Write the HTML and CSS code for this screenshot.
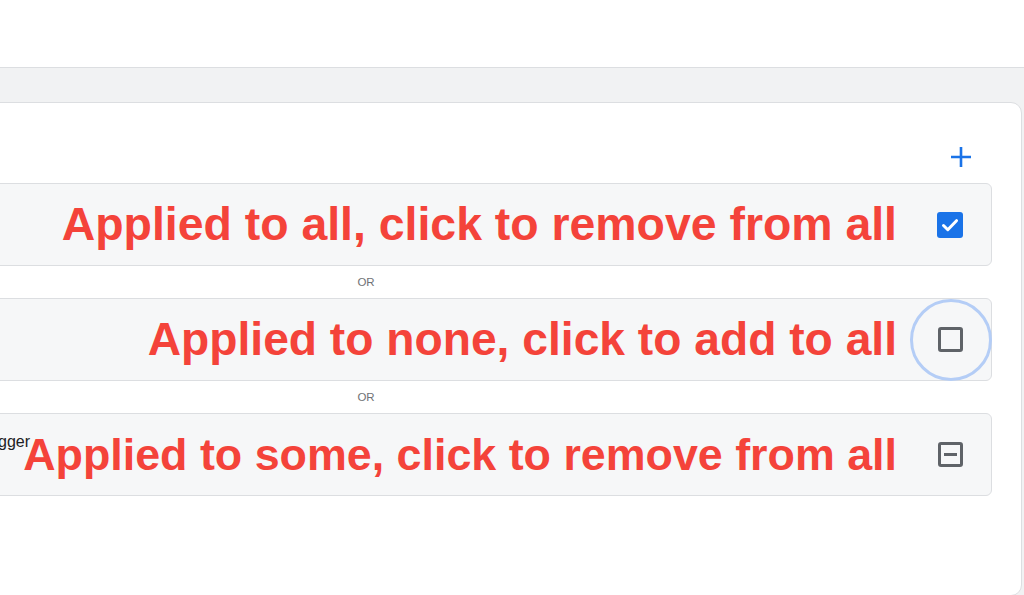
FILE: index.html
```html
<!DOCTYPE html>
<html>
<head>
<meta charset="utf-8">
<link rel="stylesheet" href="styles.css">
</head>
<body>
<div class="topbar"></div>
<div class="band">
  <div class="card">
    <div class="add-row">
      <svg class="plus" width="22" height="22" viewBox="0 0 22 22"><path d="M11 1v20M1 11h20" stroke="#1a73e8" stroke-width="2.6" fill="none"/></svg>
    </div>
    <div class="row">
      <span class="note note-all">Applied to all, click to remove from all</span>
      <span class="box checked">
        <svg width="26" height="26" viewBox="0 0 26 26"><path d="M6.5 13.5l4.3 4.2 8.7-9" stroke="#fff" stroke-width="3" fill="none" stroke-linecap="round" stroke-linejoin="round"/></svg>
      </span>
    </div>
    <div class="or">OR</div>
    <div class="row">
      <span class="note note-none">Applied to none, click to add to all</span>
      <span class="box empty"><span class="ring"></span></span>
    </div>
    <div class="or">OR</div>
    <div class="row">
      <span class="label">Trigger</span>
      <span class="note note-some">Applied to some, click to remove from all</span>
      <span class="box empty"><span class="dash"></span></span>
    </div>
  </div>
</div>
</body>
</html>
```
FILE: styles.css
```css
html, body {
  margin: 0;
  padding: 0;
  background: #ffffff;
  overflow: hidden;
  width: 1024px;
  height: 595px;
}
body {
  font-family: "Liberation Sans", Arial, sans-serif;
}
.topbar {
  height: 67px;
  background: #ffffff;
  border-bottom: 1px solid #dcdee1;
}
.band {
  background: #f1f2f3;
  padding-top: 34px;
  height: 493px;
}
.card {
  box-sizing: border-box;
  margin: 0 2px 0 -290px;
  height: 494px;
  background: #ffffff;
  border: 1px solid #dcdee1;
  border-radius: 0 11px 11px 0;
  padding: 43px 29px 0 29px;
  display: flex;
  flex-direction: column;
}
.add-row {
  display: flex;
  justify-content: flex-end;
  height: 22px;
  padding-right: 20px;
}
.add-row + .row {
  margin-top: 15px;
}
.row {
  position: relative;
  box-sizing: border-box;
  height: 83px;
  background: #f6f7f8;
  border: 1px solid #dcdee1;
  border-radius: 6px;
  display: flex;
  align-items: center;
  justify-content: flex-end;
  padding-right: 28px;
}
.note {
  position: absolute;
  right: 94px;
  top: 50%;
  transform: translateY(-52%);
  color: #f4433a;
  font-weight: bold;
  font-size: 46.4px;
  white-space: nowrap;
  line-height: 1;
}
.note-none {
  font-size: 46.2px;
}
.note-some {
  font-size: 44.8px;
}
.label {
  position: absolute;
  left: 239px;
  top: 19px;
  font-size: 16px;
  color: #202124;
}
.or {
  height: 32px;
  line-height: 32px;
  text-align: center;
  font-size: 11.5px;
  color: #6f7276;
}
.box {
  position: relative;
  box-sizing: border-box;
  width: 26px;
  height: 26px;
  display: flex;
  align-items: center;
  justify-content: center;
}
.box.checked {
  background: #1a73e8;
  border-radius: 3px;
}
.box.empty {
  border: 3px solid #5f6368;
  border-radius: 3px;
  width: 25px;
  height: 25px;
}
.dash {
  width: 13px;
  height: 3px;
  background: #5f6368;
}
.ring {
  position: absolute;
  left: 50%;
  top: 50%;
  width: 76px;
  height: 76px;
  margin: -41px 0 0 -41px;
  border: 3px solid #b4cdf6;
  border-radius: 50%;
}
```
